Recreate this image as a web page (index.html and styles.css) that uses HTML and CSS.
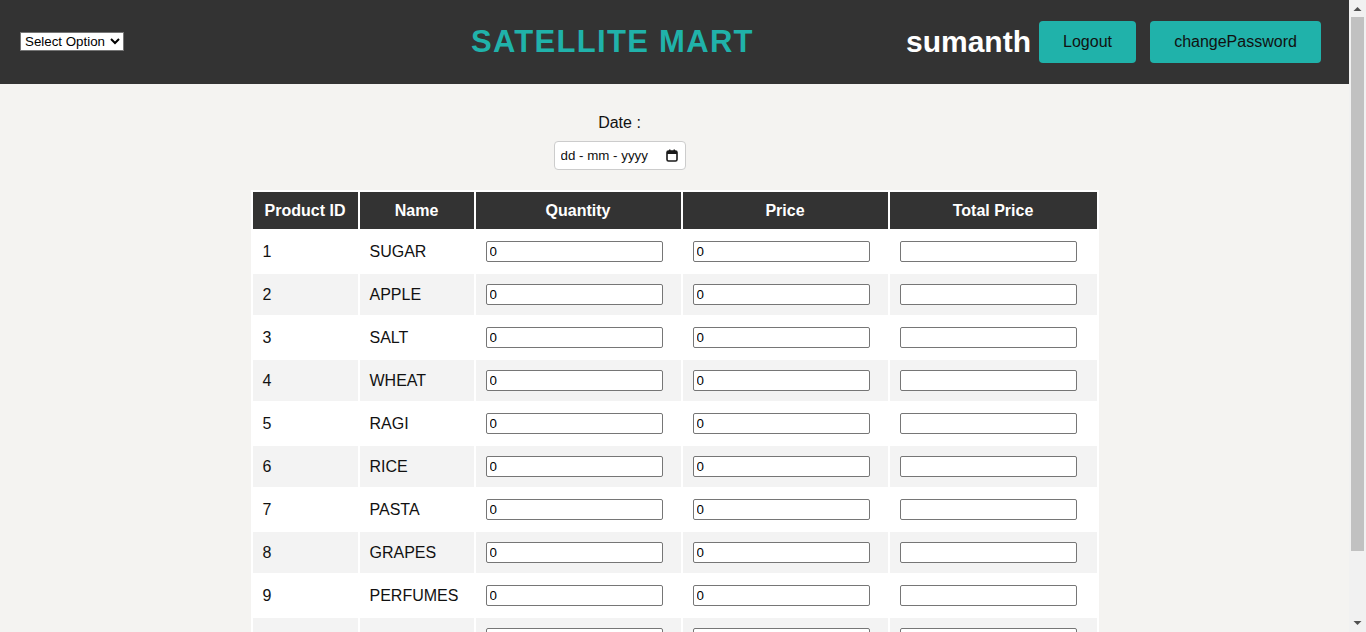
FILE: index.html
```html
<!DOCTYPE html>
<html lang="en-GB">
<head>
<meta charset="utf-8">
<title>Satellite Mart</title>
<link rel="stylesheet" href="styles.css">
</head>
<body>
<div class="page">
<header class="topbar">
  <select class="menu">
    <option>Select Option</option>
    <option>Products</option>
    <option>Orders</option>
  </select>
  <h1 class="brand">SATELLITE MART</h1>
  <div class="user">
    <span class="username">sumanth</span>
    <button class="btn">Logout</button>
    <button class="btn btn-wide">changePassword</button>
  </div>
</header>
<main class="content">
  <div class="date-block">
    <label class="date-label" for="d">Date :</label>
    <div class="date-field">
      <input id="d" class="date-input" type="text" placeholder="dd - mm - yyyy">
      <svg class="cal-icon" width="12" height="13" viewBox="0 0 12 13" aria-hidden="true">
        <rect x="1" y="2" width="10" height="10" rx="1.5" fill="none" stroke="#1a1a1a" stroke-width="1.6"/>
        <rect x="1" y="2" width="10" height="3" fill="#1a1a1a"/>
        <rect x="3" y="0.5" width="1.5" height="2.5" fill="#1a1a1a"/>
        <rect x="7.5" y="0.5" width="1.5" height="2.5" fill="#1a1a1a"/>
      </svg>
    </div>
  </div>
  <table class="products">
    <thead>
      <tr>
        <th class="c-id">Product ID</th>
        <th class="c-name">Name</th>
        <th class="c-num">Quantity</th>
        <th class="c-num">Price</th>
        <th class="c-total">Total Price</th>
      </tr>
    </thead>
    <tbody>
      <tr><td>1</td><td>SUGAR</td><td><input class="cell-input" value="0"></td><td><input class="cell-input" value="0"></td><td><input class="cell-input"></td></tr>
      <tr><td>2</td><td>APPLE</td><td><input class="cell-input" value="0"></td><td><input class="cell-input" value="0"></td><td><input class="cell-input"></td></tr>
      <tr><td>3</td><td>SALT</td><td><input class="cell-input" value="0"></td><td><input class="cell-input" value="0"></td><td><input class="cell-input"></td></tr>
      <tr><td>4</td><td>WHEAT</td><td><input class="cell-input" value="0"></td><td><input class="cell-input" value="0"></td><td><input class="cell-input"></td></tr>
      <tr><td>5</td><td>RAGI</td><td><input class="cell-input" value="0"></td><td><input class="cell-input" value="0"></td><td><input class="cell-input"></td></tr>
      <tr><td>6</td><td>RICE</td><td><input class="cell-input" value="0"></td><td><input class="cell-input" value="0"></td><td><input class="cell-input"></td></tr>
      <tr><td>7</td><td>PASTA</td><td><input class="cell-input" value="0"></td><td><input class="cell-input" value="0"></td><td><input class="cell-input"></td></tr>
      <tr><td>8</td><td>GRAPES</td><td><input class="cell-input" value="0"></td><td><input class="cell-input" value="0"></td><td><input class="cell-input"></td></tr>
      <tr><td>9</td><td>PERFUMES</td><td><input class="cell-input" value="0"></td><td><input class="cell-input" value="0"></td><td><input class="cell-input"></td></tr>
      <tr><td>10</td><td>SOAP</td><td><input class="cell-input" value="0"></td><td><input class="cell-input" value="0"></td><td><input class="cell-input"></td></tr>
    </tbody>
  </table>
</main>
</div>
<div class="scrollbar" aria-hidden="true">
  <div class="sb-btn">
    <svg width="17" height="17" viewBox="0 0 17 17"><path d="M4.5 11 L8.5 7 L12.5 11 Z" fill="#505050"/></svg>
  </div>
  <div class="sb-track">
    <div class="sb-thumb"></div>
  </div>
  <div class="sb-btn">
    <svg width="17" height="17" viewBox="0 0 17 17"><path d="M4.5 6 L8.5 10 L12.5 6 Z" fill="#505050"/></svg>
  </div>
</div>
</body>
</html>
```

FILE: styles.css
```css
html, body {
  margin: 0;
  padding: 0;
}
html::-webkit-scrollbar {
  display: none;
}
body {
  background: #f4f3f1;
  font-family: "Liberation Sans", Arial, sans-serif;
  color: #111;
}
.page {
  margin-right: 17px;
}
.scrollbar {
  position: fixed;
  top: 0;
  right: 0;
  width: 17px;
  height: 100vh;
  background: #f1f1f1;
  display: flex;
  flex-direction: column;
}
.sb-btn {
  height: 17px;
  flex: none;
}
.sb-btn svg {
  display: block;
}
.sb-track {
  flex: 1;
  padding: 0 2px 64px;
  display: flex;
}
.sb-thumb {
  flex: 1;
  background: #c1c1c1;
}
.topbar {
  height: 84px;
  background: #333333;
  display: flex;
  align-items: center;
  padding: 0 28px 0 20px;
  box-sizing: border-box;
}
.menu {
  font-family: "Liberation Sans", Arial, sans-serif;
  font-size: 13.33px;
  height: 19px;
  width: 104px;
  padding: 0;
  border: 1px solid #767676;
  border-radius: 0;
  background: #fff;
  color: #000;
  margin-top: -2px;
}
.brand {
  margin: 0 0 0 347px;
  color: #20b2aa;
  font-size: 31px;
  font-weight: bold;
  letter-spacing: 1.3px;
}
.user {
  margin-left: auto;
  display: flex;
  align-items: center;
}
.username {
  color: #fff;
  font-weight: bold;
  font-size: 30px;
  margin-right: 8px;
}
.btn {
  background: #20b2aa;
  color: #111;
  border: none;
  border-radius: 4px;
  font-family: "Liberation Sans", Arial, sans-serif;
  font-size: 16px;
  height: 42px;
  width: 97px;
  padding: 0;
}
.btn-wide {
  width: 171px;
  margin-left: 14px;
}
.content {
  padding-bottom: 34px;
}
.date-block {
  display: flex;
  flex-direction: column;
  align-items: center;
  padding-top: 30px;
  padding-right: 110px;
  gap: 9px;
}
.date-label {
  font-size: 16px;
  line-height: 18px;
  color: #111;
}
.date-field {
  position: relative;
  width: 132px;
  height: 29px;
}
.date-input {
  width: 132px;
  height: 29px;
  box-sizing: border-box;
  border: 1px solid #cccccc;
  border-radius: 4px;
  padding: 2px 6px;
  background: #fff;
  font-family: "Liberation Sans", Arial, sans-serif;
  font-size: 13.33px;
  color: #111;
}
.date-input::placeholder {
  color: #111;
  opacity: 1;
}
.cal-icon {
  position: absolute;
  right: 8px;
  top: 8px;
}
.products {
  margin: 20px auto 0;
  border-collapse: separate;
  border-spacing: 2px;
  background: #fff;
}
.products th {
  background: #333333;
  color: #fff;
  font-weight: bold;
  font-size: 16px;
  height: 37px;
  padding: 0;
  text-align: center;
}
.c-id { width: 105px; }
.c-name { width: 114px; }
.c-num { width: 205px; }
.c-total { width: 207px; }
.products td {
  height: 41px;
  padding: 0 10px 0 10px;
  font-size: 16px;
  color: #111;
  box-sizing: border-box;
}
.products tbody tr:nth-child(even) td {
  background: #f3f3f3;
}
.cell-input {
  width: 177px;
  height: 21px;
  box-sizing: border-box;
  border: 1px solid #767676;
  border-radius: 2px;
  padding: 1px 3px;
  font-family: "Liberation Sans", Arial, sans-serif;
  font-size: 13.33px;
  background: #fff;
  color: #000;
  display: block;
}
```
